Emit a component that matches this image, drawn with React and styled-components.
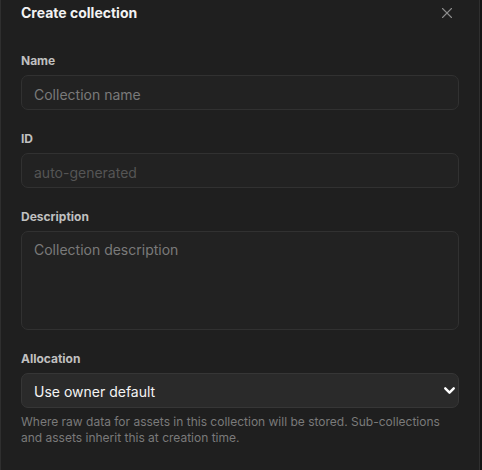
import React from "react";
import styled, { createGlobalStyle } from "styled-components";
import { X, ChevronDown } from "lucide-react";

const Global = createGlobalStyle`
  html, body { margin: 0; padding: 0; background: #141414; }
  body { font-family: Inter, "Noto Sans", sans-serif; -webkit-font-smoothing: antialiased; }
  * { box-sizing: border-box; }
`;

const Dialog = styled.div`
  width: 480px;
  min-height: 470px;
  background: #1f1f1f;
  border: 1px solid #2f2f2f;
  border-top: 0;
  padding: 3px 20px 24px;
  display: flex;
  flex-direction: column;
`;

const Header = styled.div`
  display: flex;
  align-items: center;
  justify-content: space-between;
  height: 20px;
  margin-bottom: 29px;
`;

const Title = styled.h2`
  margin: 0;
  font-size: 14px;
  line-height: 20px;
  font-weight: 700;
  color: #f2f2f2;
`;

const CloseButton = styled.button`
  display: flex;
  align-items: center;
  justify-content: center;
  width: 20px;
  height: 20px;
  padding: 0;
  margin-right: 2px;
  border: 0;
  background: transparent;
  color: #8c8c8c;
  cursor: pointer;
`;

const Form = styled.form`
  display: flex;
  flex-direction: column;
  gap: 20px;
`;

const Field = styled.div`
  display: flex;
  flex-direction: column;
`;

const Label = styled.label`
  font-size: 12px;
  line-height: 16px;
  font-weight: 700;
  color: #c0c0c0;
  padding-top: 1px;
  margin-bottom: 6px;
`;

const Input = styled.input`
  height: 35px;
  width: 100%;
  padding: 3px 12px 0;
  border: 1px solid #313131;
  border-radius: 7px;
  background: #222222;
  color: #e8e8e8;
  font-family: inherit;
  font-size: 14px;
  outline: none;
  &::placeholder { color: #7a7a7a; }
  &:disabled::placeholder { color: #555555; }
`;

const TextArea = styled.textarea`
  height: 99px;
  width: 100%;
  padding: 8px 12px;
  border: 1px solid #313131;
  border-radius: 7px;
  background: #222222;
  color: #e8e8e8;
  font-family: inherit;
  font-size: 14px;
  line-height: 20px;
  resize: none;
  outline: none;
  &::placeholder { color: #7a7a7a; }
`;

const SelectWrap = styled.div`
  position: relative;
`;

const Select = styled.select`
  appearance: none;
  -webkit-appearance: none;
  height: 35px;
  width: 100%;
  padding: 2px 32px 0 12px;
  border: 1px solid #363636;
  border-radius: 7px;
  background: #2a2a2a;
  color: #f4f4f4;
  font-family: inherit;
  font-size: 14px;
  outline: none;
`;

const Chevron = styled.span`
  position: absolute;
  right: 1px;
  top: 9px;
  display: flex;
  color: #ffffff;
  pointer-events: none;
`;

const Help = styled.p`
  margin: 6px 0 0;
  font-size: 12px;
  line-height: 16px;
  color: #7a7a7a;
`;

export default function App() {
  return (
    <>
      <Global />
      <Dialog>
        <Header>
          <Title>Create collection</Title>
          <CloseButton aria-label="Close">
            <X size={18} strokeWidth={1.5} />
          </CloseButton>
        </Header>
        <Form>
          <Field>
            <Label>Name</Label>
            <Input placeholder="Collection name" />
          </Field>
          <Field>
            <Label>ID</Label>
            <Input placeholder="auto-generated" disabled />
          </Field>
          <Field>
            <Label>Description</Label>
            <TextArea placeholder="Collection description" />
          </Field>
          <Field>
            <Label>Allocation</Label>
            <SelectWrap>
              <Select defaultValue="default">
                <option value="default">Use owner default</option>
              </Select>
              <Chevron>
                <ChevronDown size={17} strokeWidth={3.4} />
              </Chevron>
            </SelectWrap>
            <Help>
              Where raw data for assets in this collection will be stored. Sub-collections and assets inherit this at creation time.
            </Help>
          </Field>
        </Form>
      </Dialog>
    </>
  );
}
